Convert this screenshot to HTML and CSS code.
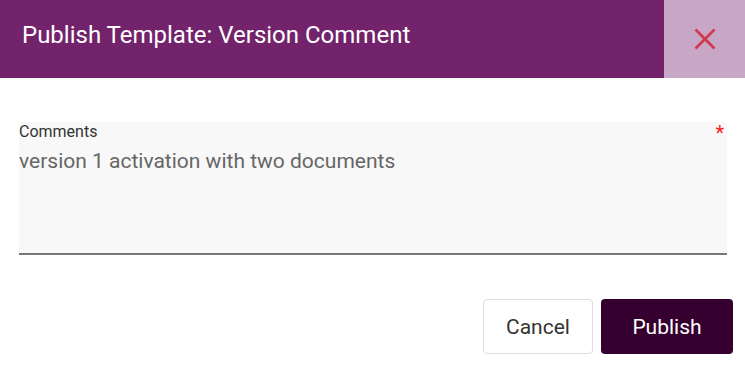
FILE: index.html
```html
<!DOCTYPE html>
<html lang="en">

<head>
    <title>Publish Template</title>
    <link rel="stylesheet" href="styles.css">
</head>

<body>
    <div class="dialog">
        <div class="dialog-header">
            <h1 class="dialog-title">Publish Template: Version Comment</h1>
            <button class="close-btn" aria-label="Close">
                <svg width="22" height="22" viewBox="0 0 22 22">
                    <path d="M1.5 1.5 L20.5 20.5 M20.5 1.5 L1.5 20.5" stroke="#d0384e" stroke-width="2.6" fill="none" />
                </svg>
            </button>
        </div>
        <div class="dialog-body">
            <div class="field">
                <label class="field-label">Comments</label>
                <span class="required">*</span>
                <div class="field-value">version 1 activation with two documents</div>
            </div>
        </div>
        <div class="dialog-actions">
            <button class="btn btn-cancel">Cancel</button>
            <button class="btn btn-publish">Publish</button>
        </div>
    </div>
</body>

</html>
```

FILE: styles.css
```css
body {
    margin: 0;
    background-color: #ffffff;
    font-family: Roboto, "Liberation Sans", sans-serif;
}

.dialog {
    width: 745px;
    height: 368px;
    display: flex;
    flex-direction: column;
}

.dialog-header {
    display: flex;
    height: 78px;
    background-color: #72236b;
}

.dialog-title {
    flex: 1;
    margin: 0;
    padding: 21px 0 0 22px;
    font-size: 24px;
    line-height: 28px;
    font-weight: 400;
    color: #ffffff;
}

.close-btn {
    width: 81px;
    border: none;
    padding: 0;
    background-color: #c8a6c6;
    display: flex;
    align-items: center;
    justify-content: center;
}

.dialog-body {
    padding: 44px 18px 0 19px;
}

.field {
    position: relative;
    height: 131px;
    background-color: #f8f8f8;
    border-bottom: 2px solid #777777;
}

.field-label {
    display: block;
    padding-top: 1px;
    font-size: 16px;
    color: #333333;
    line-height: 18px;
}

.required {
    position: absolute;
    top: 1px;
    right: 3px;
    color: #ff1a1a;
    font-size: 20px;
    line-height: 20px;
}

.field-value {
    margin-top: 7px;
    font-size: 21px;
    line-height: 26px;
    color: #666666;
}

.dialog-actions {
    display: flex;
    justify-content: flex-end;
    gap: 8px;
    padding: 44px 12px 0 0;
}

.btn {
    height: 55px;
    border-radius: 4px;
    font-family: Roboto, "Liberation Sans", sans-serif;
    font-size: 21px;
}

.btn-cancel {
    width: 110px;
    background-color: #ffffff;
    border: 1px solid #dddddd;
    color: #333333;
}

.btn-publish {
    width: 132px;
    background-color: #35002f;
    border: none;
    color: #ffffff;
}
```
